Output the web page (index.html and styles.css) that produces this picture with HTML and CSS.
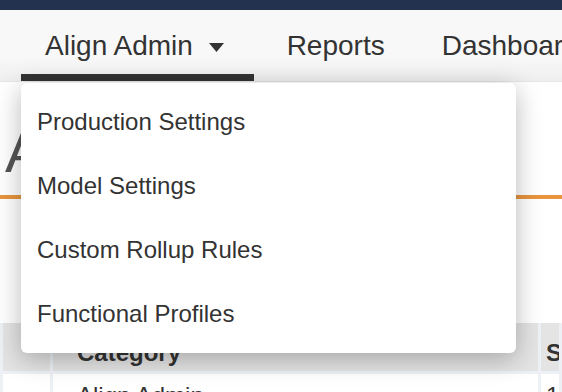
FILE: index.html
```html
<!DOCTYPE html>
<html lang="en">
<head>
    <meta charset="UTF-8">
    <meta name="viewport" content="width=device-width, initial-scale=1.0">
    <title>Align Admin</title>
    <link rel="stylesheet" href="styles.css">
</head>
<body>
    <div class="topbar"></div>
    <nav class="navbar">
        <ul class="nav">
            <li class="nav-item active">Align Admin <svg class="caret" width="15" height="9" viewBox="0 0 15 9"><path d="M0 0H15L7.5 9Z" fill="#333"/></svg></li>
            <li class="nav-item">Reports</li>
            <li class="nav-item">Dashboards</li>
        </ul>
    </nav>

    <div class="page-header">
        <h1>Align Admin</h1>
    </div>

    <table class="grid">
        <colgroup>
            <col class="col-sel">
            <col class="col-name">
            <col>
        </colgroup>
        <thead>
            <tr>
                <th></th>
                <th>Category</th>
                <th class="col-sort">Sort</th>
            </tr>
        </thead>
        <tbody>
            <tr>
                <td></td>
                <td>Align Admin</td>
                <td class="col-sort">1</td>
            </tr>
        </tbody>
    </table>

    <ul class="dropdown">
        <li>Production Settings</li>
        <li>Model Settings</li>
        <li>Custom Rollup Rules</li>
        <li>Functional Profiles</li>
    </ul>
</body>
</html>
```

FILE: styles.css
```css
body {
    margin: 0;
    font-family: "Liberation Sans", Arial, sans-serif;
    color: #333;
    background-color: #fff;
    overflow: hidden;
}
.topbar {
    height: 10px;
    background-color: #22324f;
}
.navbar {
    height: 71px;
    background: linear-gradient(#f8f8f8 65%, #efefef);
    border-bottom: 1px solid #e6e6e6;
}
.nav {
    display: flex;
    gap: 9px;
    margin: 0;
    padding: 0 0 0 21px;
    list-style: none;
    white-space: nowrap;
}
.nav-item {
    padding: 0 24px;
    font-size: 28px;
    line-height: 71px;
    color: #333;
}
.nav-item.active {
    padding-right: 30px;
    box-shadow: inset 0 -7px 0 #333;
}
.caret {
    margin-left: 8px;
    vertical-align: 3px;
}
.page-header {
    padding: 41px 5px 14px;
    border-bottom: 4px solid #e8953e;
}
.page-header h1 {
    margin: 0;
    font-size: 58px;
    line-height: 58px;
    font-weight: normal;
    color: #555;
}
.grid {
    margin-top: 124px;
    width: 100%;
    table-layout: fixed;
    border-collapse: collapse;
    font-size: 24px;
}
.grid .col-sel {
    width: 50px;
}
.grid .col-name {
    width: 488px;
}
.grid th, .grid td {
    padding: 0 24px;
    text-align: left;
    border: 3px solid #edf1f5;
    border-top: none;
    white-space: nowrap;
    overflow: hidden;
}
.grid th {
    height: 44px;
    padding-bottom: 4px;
    vertical-align: bottom;
    background-color: #e4e4e4;
    font-weight: bold;
}
.grid td {
    height: 44px;
}
.grid .col-sort {
    padding-left: 5px;
}
.dropdown {
    position: absolute;
    top: 83px;
    left: 21px;
    width: 495px;
    margin: 0;
    padding: 7px 0;
    list-style: none;
    background-color: #fff;
    border-radius: 6px;
    box-shadow: 0 6px 26px rgba(0, 0, 0, 0.28);
}
.dropdown li {
    padding: 0 16px;
    font-size: 24px;
    line-height: 64px;
    color: #333;
}
```
